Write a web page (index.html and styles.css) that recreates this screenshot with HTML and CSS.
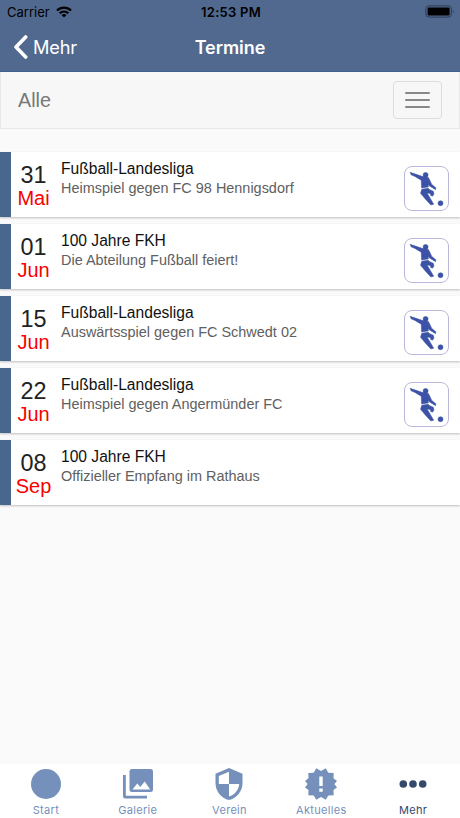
FILE: index.html
```
<!DOCTYPE html>
<html lang="de">
<head>
<meta charset="utf-8">
<title>Termine</title>
<link rel="stylesheet" href="styles.css">
</head>
<body>
<svg class="defs" width="0" height="0" aria-hidden="true">
  <symbol id="player" viewBox="1 1 43 43">
    <g fill="#3c52a6" stroke="#3c52a6" stroke-width=".5" stroke-linejoin="round">
      <circle cx="21.600" cy="8.900" r="2.500"/>
      <path d="M6.200 6.300 18 10.300 24.400 11.500 26.200 15 27.600 18.200 31.800 21.700 31.600 23.700 25.500 20 24.200 18.500 24.300 20.900 17.600 21.900 17.200 14.200 11 10.500 7 8.700Z"/>
      <path d="M17.800 23.200 24.300 22.200 25.300 23.400 29.300 25.300 30 28 28.500 30.200 26.400 29.300 26.700 27.700 23 27 25.600 31.200 29.700 38.200 26.900 39 21.300 33 16.500 27.200Z"/>
      <circle cx="36.500" cy="37.200" r="2.500"/>
    </g>
  </symbol>
</svg>
<div class="app">
  <header class="header">
    <div class="status">
      <div class="carrier"><span>Carrier</span>
        <svg width="16" height="12" viewBox="0 0 16 12"><g fill="none" stroke="#000" stroke-width="2.2"><path d="M1 4.500C5 .6 11 .6 15 4.500"/><path d="M3.600 7.300C6.200 4.900 9.800 4.900 12.400 7.300"/></g><path d="M5.500 8.900Q8 6.900 10.500 8.900L8 11.400Z"/></svg>
      </div>
      <span class="clock">12:53 PM</span>
      <svg class="battery" width="30" height="13" viewBox="0 0 30 13"><rect x=".9" y=".9" width="25.500" height="11.200" rx="3" fill="none" stroke="#2b3a50" stroke-width="1"/><rect x="2.600" y="2.500" width="22" height="8" rx="1.300"/><path d="M28 4.700q1.500 1.800 0 3.600Z" fill="#2b3a50"/></svg>
    </div>
    <nav class="navbar">
      <div class="back"><svg width="15" height="24" viewBox="0 0 15 24"><path d="M12.700 2 3 12 12.700 22" fill="none" stroke="#fff" stroke-width="3.600" stroke-linecap="round" stroke-linejoin="round"/></svg><span>Mehr</span></div>
      <h1 class="title">Termine</h1>
      <div></div>
    </nav>
  </header>
  <section class="filter">
    <span>Alle</span>
    <button class="toggle" aria-label="Filter"><i></i><i></i><i></i></button>
  </section>
  <main class="list">
    <article class="event"><div class="date"><b>31</b><em>Mai</em></div><div class="info"><h2>Fußball-Landesliga</h2><p>Heimspiel gegen FC 98 Hennigsdorf</p></div><svg class="sport"><use href="#player"/></svg></article>
    <article class="event"><div class="date"><b>01</b><em>Jun</em></div><div class="info"><h2>100 Jahre FKH</h2><p>Die Abteilung Fußball feiert!</p></div><svg class="sport"><use href="#player"/></svg></article>
    <article class="event"><div class="date"><b>15</b><em>Jun</em></div><div class="info"><h2>Fußball-Landesliga</h2><p>Auswärtsspiel gegen FC Schwedt 02</p></div><svg class="sport"><use href="#player"/></svg></article>
    <article class="event"><div class="date"><b>22</b><em>Jun</em></div><div class="info"><h2>Fußball-Landesliga</h2><p>Heimspiel gegen Angermünder FC</p></div><svg class="sport"><use href="#player"/></svg></article>
    <article class="event"><div class="date"><b>08</b><em>Sep</em></div><div class="info"><h2>100 Jahre FKH</h2><p>Offizieller Empfang im Rathaus</p></div></article>
  </main>
  <footer class="tabs">
    <div class="tab"><svg viewBox="0 0 32 32"><circle cx="16" cy="16" r="15"/></svg><span>Start</span></div>
    <div class="tab"><svg viewBox="0 0 32 32"><path fill-rule="evenodd" d="M10 1h18.500a2.500 2.500 0 0 1 2.500 2.500v18a2.500 2.500 0 0 1-2.500 2.500H10a2.500 2.500 0 0 1-2.500-2.500v-18A2.500 2.500 0 0 1 10 1ZM10.500 21.500h17.700l-5.500-8-4.400 5.500-3-3.400Z"/><path d="M1 7h2.800v20.700H25v2.800H3.500A2.500 2.500 0 0 1 1 28Z"/></svg><span>Galerie</span></div>
    <div class="tab"><svg viewBox="0 0 32 32"><path fill-rule="evenodd" d="M16 0 29.500 5.700V15c0 8.400-5.700 15.300-13.500 17C8.200 30.300 2.500 23.400 2.500 15V5.700ZM16 3.800 5.800 8v8H16ZM16 16v12.500c5.700-1.700 9.700-6.500 10.200-12.500Z"/></svg><span>Verein</span></div>
    <div class="tab"><svg viewBox="0 0 32 32"><path fill-rule="evenodd" d="m16 3 4.700-2.700 2.600 4.500 5.400.1-.2 5.300L32 13l-2.600 3 2.600 3.400-3.500 2.600.2 5.300-5.400.1-2.600 4.300L16 29l-4.700 2.700-2.600-4.300-5.400-.1.200-5.300L0 19.400 2.600 16 0 13l3.500-2.800-.2-5.300 5.400-.1L11.300.3ZM14.300 8.500v9.500h3.400V8.500ZM14.300 20.400v3.400h3.400v-3.400Z"/></svg><span>Aktuelles</span></div>
    <div class="tab active"><svg viewBox="0 0 32 32"><circle cx="6.300" cy="16" r="3.800"/><circle cx="16" cy="16" r="3.800"/><circle cx="25.700" cy="16" r="3.800"/></svg><span>Mehr</span></div>
  </footer>
</div>
</body>
</html>
```
FILE: styles.css
```
* { box-sizing: border-box; }
body { margin: 0; font-family: "Liberation Sans", Arial, sans-serif; }
.defs { position: absolute; }
.app { display: flex; flex-direction: column; width: 460px; height: 818px; background: #fafafa; overflow: hidden; }
.header { height: 72px; background: #51698f; border-bottom: 1px solid #3f5f91; font-family: Inter, sans-serif; }
.status { display: grid; grid-template-columns: 1fr auto 1fr; align-items: center; height: 24px; padding: 0 5px 0 7px; font-size: 13px; color: #000; }
.carrier { display: flex; align-items: center; gap: 6px; }
.clock { font-weight: 600; letter-spacing: .25px; }
.battery { justify-self: end; margin-top: -1px; }
.navbar { display: grid; grid-template-columns: 1fr auto 1fr; align-items: center; height: 46px; padding: 0 13px; color: #fff; }
.back { display: flex; align-items: center; gap: 5px; font-size: 18.200px; letter-spacing: -.2px; }
.title { margin: 0; font-size: 18px; font-weight: 600; letter-spacing: -.05px; }
.filter { display: flex; align-items: center; justify-content: space-between; height: 57px; padding: 0 17px; background: #f7f7f7; border: 1px solid #e7e7e7; border-top: 0; font-size: 19.700px; color: #777; }
.toggle { display: flex; flex-direction: column; align-items: center; justify-content: center; gap: 5px; width: 49px; height: 38px; padding: 0; border: 1px solid #ddd; border-radius: 4px; background: transparent; }
.toggle i { width: 25px; height: 2px; border-radius: 1px; background: #888; }
.list { display: flex; flex-direction: column; gap: 7px; flex: 1; padding-top: 23px; }
.event { display: flex; height: 65px; padding-right: 11px; background: linear-gradient(90deg, #48678e 11.400px, #fff 11.400px); padding-left: 12px; box-shadow: 0 1px 2px rgba(0,0,0,.24); }
.date { display: flex; flex-direction: column; align-items: center; width: 43px; padding-top: 11px; }
.date b { font-size: 23.400px; line-height: 24px; font-weight: 400; color: #222; }
.date em { font-size: 20px; line-height: 23px; font-style: normal; color: #f90000; }
.info { flex: 1; padding: 8px 0 0 6px; }
.info h2 { margin: 0; font-size: 15.600px; line-height: 18px; font-weight: 400; color: #111; }
.info p { margin: 0; font-size: 14.450px; line-height: 20px; color: #606060; }
.sport { width: 45px; height: 45px; margin-top: 14px; border: 1px solid #b8b8dc; border-radius: 8px; }
.tabs { display: grid; grid-template-columns: repeat(5, 1fr); width: 459px; height: 54px; background: #fff; box-shadow: 1px 0 #fff; }
.tab { display: flex; flex-direction: column; align-items: center; padding-top: 4px; color: #7590bb; font: 400 11px/14px Inter, sans-serif; letter-spacing: .3px; }
.tab svg { width: 32px; height: 32px; fill: currentColor; }
.tab span { margin-top: 3px; }
.active { color: #34496c; }
```
